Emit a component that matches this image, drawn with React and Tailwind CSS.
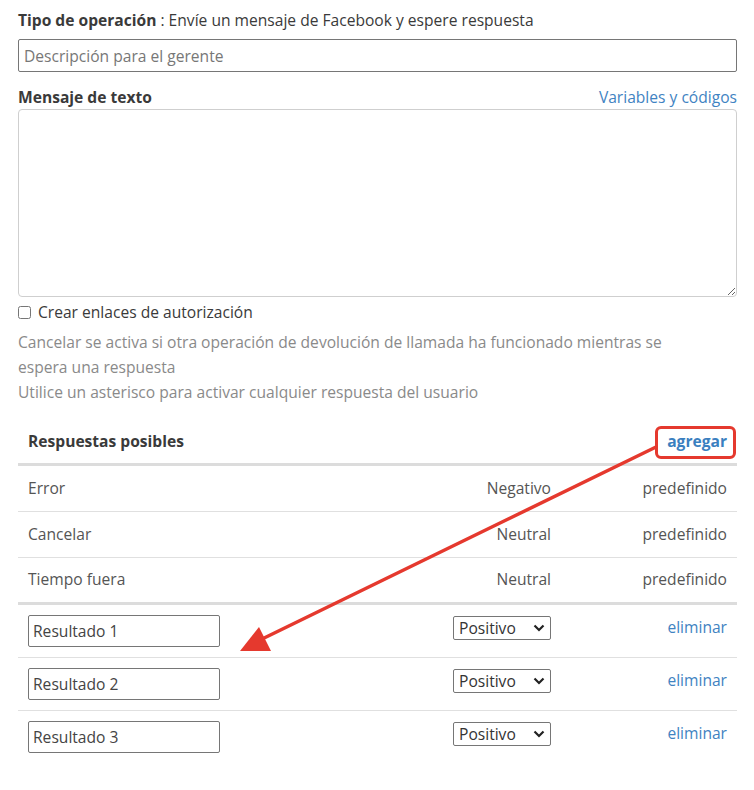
import React from "react";

const rows = [
  { name: "Error", type: "Negativo" },
  { name: "Cancelar", type: "Neutral" },
  { name: "Tiempo fuera", type: "Neutral" },
];

const results = ["Resultado 1", "Resultado 2", "Resultado 3"];

function Chevron() {
  return (
    <svg width="12" height="8" viewBox="0 0 12 8" className="pointer-events-none absolute right-[6px] top-[8px]">
      <path d="M1.5 1.5 L6 6 L10.5 1.5" fill="none" stroke="#222" strokeWidth="2.2" />
    </svg>
  );
}

/**
 * Operation editor: wait for a Facebook reply.
 */
export default function App() {
  return (
    <div className="relative w-[754px] min-h-[790px] bg-white px-[18px] pt-[8px] pr-[17px] text-[15.6px] text-[#3a3a3a] font-['Open_Sans','Liberation_Sans',sans-serif]">
      <p className="leading-[24px]">
        <span className="font-bold">Tipo de operación</span> : Envíe un mensaje de Facebook y espere respuesta
      </p>
      <input
        type="text"
        placeholder="Descripción para el gerente"
        className="mt-[7px] block h-[33px] w-full rounded-[2px] border border-[#767676] px-[5px] text-[15.6px] placeholder:text-[#777] outline-none"
      />

      <div className="mt-[13px] flex items-center justify-between leading-[24px]">
        <p className="font-bold">Mensaje de texto</p>
        <a className="text-[#3f83c2]">Variables y códigos</a>
      </div>
      <textarea className="block h-[188px] w-full rounded-[4px] border border-[#cfcfcf] outline-none" />

      <label className="mt-[3px] flex items-center gap-[7px] leading-[24px]">
        <input type="checkbox" className="h-[13px] w-[13px]" />
        <span>Crear enlaces de autorización</span>
      </label>

      <div className="mt-[6px] leading-[25px] text-[#8a8a8a]">
        <p className="max-w-[680px]">Cancelar se activa si otra operación de devolución de llamada ha funcionado mientras se espera una respuesta</p>
        <p>Utilice un asterisco para activar cualquier respuesta del usuario</p>
      </div>

      <div className="mt-[15px]">
        <div className="flex h-[46px] items-center justify-between border-b-[3px] border-[#dcdcdc] px-[10px]">
          <p className="font-bold">Respuestas posibles</p>
          <a className="font-bold text-[#3a7fc0]">agregar</a>
        </div>
        {rows.map((r, i) => (
          <div
            key={r.name}
            className={`grid grid-cols-[1fr_auto_176px] items-center px-[10px] text-[#555] ${i === rows.length - 1 ? "h-[47px] border-b-[3px] border-[#dcdcdc]" : "h-[46px] border-b border-[#e0e0e0]"}`}
          >
            <span>{r.name}</span>
            <span className="text-right">{r.type}</span>
            <span className="text-right">predefinido</span>
          </div>
        ))}
        {results.map((r, i) => (
          <div
            key={r}
            className={`grid h-[53px] grid-cols-[1fr_auto_176px] items-start px-[10px] pt-[10px] ${i < results.length - 1 ? "border-b border-[#e0e0e0]" : ""}`}
          >
            <div>
              <input
                type="text"
                defaultValue={r}
                className="h-[32px] w-[192px] rounded-[2px] border border-[#767676] px-[4px] text-[15.6px] text-[#444] outline-none"
              />
            </div>
            <div className="relative mt-[1px]">
              <select className="h-[24px] w-[98px] appearance-none rounded-[2px] border border-[#767676] pl-[5px] text-[15.6px] leading-[22px] text-[#333] outline-none">
                <option>Positivo</option>
                <option>Negativo</option>
                <option>Neutral</option>
              </select>
              <Chevron />
            </div>
            <a className="pt-[1px] text-right text-[#3f83c2]">eliminar</a>
          </div>
        ))}
      </div>

      {/* annotation overlay */}
      <div className="pointer-events-none absolute left-[655px] top-[426px] h-[33px] w-[81px] rounded-[6px] border-[3px] border-[#e5392e]" />
      <svg className="pointer-events-none absolute left-0 top-0" width="754" height="790">
        <line x1="656" y1="447" x2="258" y2="641" stroke="#e5392e" strokeWidth="3.5" strokeLinecap="round" />
        <polygon points="240,651 259,627 271,651" fill="#e5392e" />
      </svg>
    </div>
  );
}
